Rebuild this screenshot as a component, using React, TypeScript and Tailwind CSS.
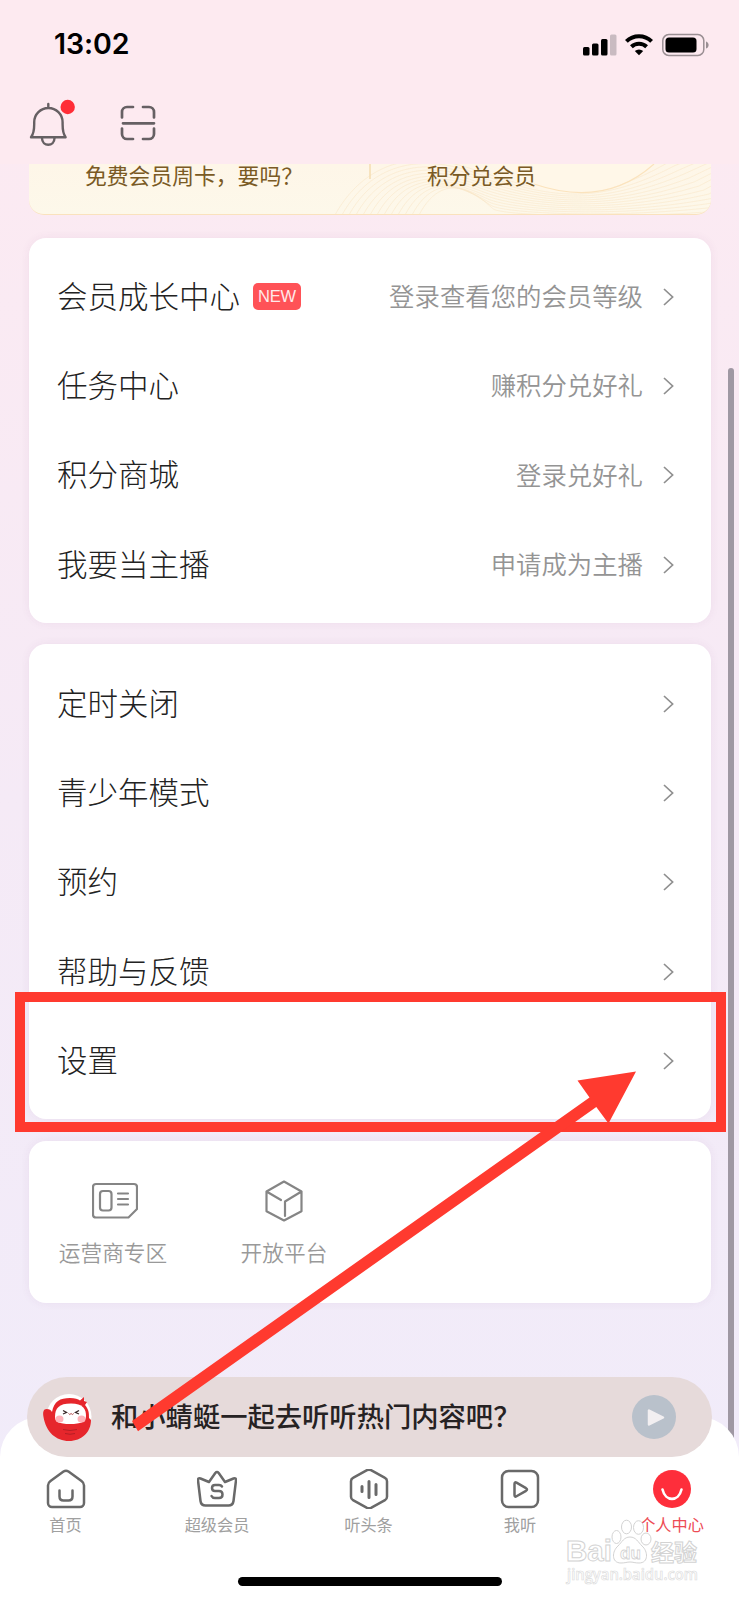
import React from 'react';

interface RowProps {
    label: string;
    hint?: string;
    badge?: string;
}

const memberRows: RowProps[] = [
    { label: '会员成长中心', hint: '登录查看您的会员等级', badge: 'NEW' },
    { label: '任务中心', hint: '赚积分兑好礼' },
    { label: '积分商城', hint: '登录兑好礼' },
    { label: '我要当主播', hint: '申请成为主播' },
];

const settingRows: RowProps[] = [
    { label: '定时关闭' },
    { label: '青少年模式' },
    { label: '预约' },
    { label: '帮助与反馈' },
    { label: '设置' },
];

function Row({ label, hint, badge }: RowProps) {
    return (
        <div className="flex h-[89.3px] items-center pl-[28px] pr-[37px]">
            <span className="pb-[3px] text-[30.5px] leading-none font-light text-[#222]">{label}</span>
            {badge && (
                <span className="ml-[13px] flex h-[27px] w-[48px] items-center justify-center rounded-[5px] bg-[#ff5257] font-['Liberation_Sans'] text-[16.5px] tracking-[-0.2px] text-[#ffe9e9]">
                    {badge}
                </span>
            )}
            <span className="ml-auto pb-[2px] text-[25.4px] leading-none font-[350] text-[#949494]">{hint}</span>
            <svg className="ml-[20px] h-[18px] w-[11px] shrink-0" viewBox="0 0 11 18" fill="none" stroke="#8f8f8f" strokeWidth="1.7">
                <path d="M1 1l8.6 8L1 17" />
            </svg>
        </div>
    );
}

function Card({ children, className }: { children: React.ReactNode; className: string }) {
    return (
        <section className={`ml-[29px] w-[682px] shrink-0 rounded-[17px] bg-white shadow-[0_0_10px_rgba(120,60,110,0.07)] ${className}`}>
            {children}
        </section>
    );
}

function StatusBar() {
    return (
        <div className="flex h-[88px] items-center pl-[54px] pr-[29px] pt-[1px]">
            <span className="font-['Inter'] text-[28.5px] leading-none font-semibold tracking-[-0.1px] text-black">13:02</span>
            <svg className="ml-auto h-[24px] w-[128px]" viewBox="0 0 128 24">
                <rect x="1" y="14" width="6.5" height="8.5" rx="1.5" />
                <rect x="10" y="10.5" width="6.5" height="12" rx="1.5" />
                <rect x="19" y="6" width="6.5" height="16.5" rx="1.5" />
                <rect x="28" y="1.5" width="6.5" height="21" rx="1.5" fill="#c9bbc1" />
                <g fill="none" stroke="#000" strokeWidth="4">
                    <path d="M44.4 8.4a18 18 0 0 1 25.2 0" />
                    <path d="M49.4 13.8a11 11 0 0 1 15.2 0" />
                </g>
                <path d="M57 22.3l-4.2-4.2a6.3 6.3 0 0 1 8.4 0z" />
                <rect x="80.8" y="1.6" width="41" height="20.8" rx="6" fill="none" stroke="#9a8f93" strokeWidth="1.5" />
                <rect x="83.5" y="4.5" width="31" height="15" rx="3.5" />
                <path d="M124 8.500c3.500 1 3.500 6 0 7z" fill="#9a8f93" />
            </svg>
        </div>
    );
}

function TopIcons() {
    return (
        <div className="flex h-[76px] items-start gap-[44px] pl-[28px] pt-[10px]">
            <svg className="h-[52px] w-[48px]" viewBox="28 98 48 52" fill="none" stroke="#666063" strokeWidth="2.4" strokeLinejoin="round" strokeLinecap="round">
                <path d="M48.300 104v4M31 137.200c2.400-3 3.200-7 3.200-13v-2a14.200 14.200 0 0 1 28.400 0v2c0 6 .8 10 3 13z" />
                <path d="M42 138c0 9 12.500 9 12.500 0" />
                <circle cx="67.700" cy="107" r="7.200" fill="#ff2d37" stroke="none" />
            </svg>
            <svg className="mt-[7px] h-[36px] w-[36px]" viewBox="0 0 36 36" fill="none" stroke="#666063" strokeWidth="2.7" strokeLinecap="round">
                <path d="M2 12.500V7a5 5 0 0 1 5-5h6M23 2h6a5 5 0 0 1 5 5v5.500M34 23.500V29a5 5 0 0 1-5 5h-6M13 34H7a5 5 0 0 1-5-5v-5.500M3 18.300h31" />
            </svg>
        </div>
    );
}

// hairlines behind the member banner
const waves = Array.from({ length: 13 }, (_, i) => i);

function MemberBanner() {
    return (
        <div className="relative ml-[29px] flex h-[51px] w-[682px] shrink-0 overflow-hidden rounded-b-[15px] border-b-[1.5px] border-[#fae2bd] bg-gradient-to-b from-[#fef6e8] to-[#fdf8ea] text-[21.8px] leading-[22px] text-[#7a5a24]">
            <svg className="absolute inset-0 h-[50px] w-[682px]" viewBox="0 0 682 50" fill="none">
                {waves.map((i) => (
                    <path
                        key={i}
                        d={`M${306 + i * 7} 51C${322 + i * 8} ${22 - i * 2} ${360 + i * 8} ${-22 + i * 5} ${440 + i * 2} ${4 + i * 3.4}S${560 + i * 3} ${44 + i} ${640 + i * 5} ${i * 4 - 2}L${690 + i * 3} ${-22 + i * 4}`}
                        stroke="#f8e3c1"
                        strokeWidth="0.8"
                        opacity="0.6"
                    />
                ))}
                <path d="M470 0c14 15 32 29 75 29 33 0 56-10 80-29z" fill="#fff7e8" />
                <path d="M505 20c35 12 80 16 120-20" stroke="#fbe3bd" strokeWidth="1.2" />
                <path d="M341 0v15" stroke="#f5ddb0" strokeWidth="1.5" />
            </svg>
            <span className="relative ml-[56px] w-[342px]">免费会员周卡，要吗？</span>
            <span className="relative">积分兑会员</span>
        </div>
    );
}

function Services() {
    return (
        <div className="flex h-[162px] pt-[38px] text-[21.7px] leading-none font-[350] text-[#999]">
            <div className="flex w-[168px] flex-col items-center">
                <svg className="ml-[3px] h-[44px] w-[46px]" viewBox="0 0 46 44" fill="none" stroke="#858585" strokeWidth="2.2">
                    <path d="M4 5h38a3 3 0 0 1 3 3v22l-8.500 8.500H4a3 3 0 0 1-3-3V8a3 3 0 0 1 3-3z" />
                    <rect x="8" y="12" width="11.5" height="19.500" rx="3" />
                    <path d="M26 14.500h10M26 20h10M26 25.500h10" strokeLinecap="round" />
                </svg>
                <span className="mt-[18px]">运营商专区</span>
            </div>
            <div className="flex w-[174px] flex-col items-center">
                <svg className="h-[44px] w-[38px]" viewBox="0 0 38 44" fill="none" stroke="#858585" strokeWidth="2.2" strokeLinejoin="round" strokeLinecap="round">
                    <path d="M19 2.500l17.500 10v19.800L19 41.500 1.500 32.300V12.500zM1.500 12.500L16 21M36.500 12.500L20 22.500V37" />
                </svg>
                <span className="mt-[18px]">开放平台</span>
            </div>
        </div>
    );
}

function Mascot() {
    return (
        <svg className="h-[48px] w-[52px]" viewBox="0 0 52 48">
            <circle cx="27" cy="23.500" r="22.500" fill="#fff" />
            <path d="M10 19C12 8 18 5 28 5c5 0 8 1 10 2.500l4-3.500 0 4 3 1-2 3c4 5 4 8 4 13l2 2c0 12-9 21-22 21C14 48 4 39 1.500 24c-1-5 0-8 3-8s4.500 1 5.500 3z" fill="#e6262c" />
            <path d="M13 24c0-9 4-13.500 16-13.500S44 16 44 23c0 6-5 8-16 8s-15-2-15-7z" fill="#fff" />
            <path d="M21 17.500l3.500 2-3.500 1.500M37 17.500l-3.500 2 3.500 1.500" fill="none" stroke="#3a2a2a" strokeWidth="1.300" />
            <path d="M26.500 20.500q1.300 2 2.600 0q1.300 2 2.600 0" fill="none" stroke="#b04a4a" strokeWidth="1" />
            <ellipse cx="17.500" cy="26" rx="4" ry="3.500" fill="#ffb2b9" />
            <ellipse cx="39.500" cy="26" rx="4" ry="3.500" fill="#ffb2b9" />
            <path d="M21 36.500q7 2 14 0M23 40.500q5 1.500 10 0" fill="none" stroke="#b51e25" strokeWidth="1" />
        </svg>
    );
}

function PlayerBar() {
    return (
        <div className="relative mx-auto flex h-[80px] w-[685px] items-center rounded-full bg-[#e6dada] pl-[15px] pr-[36px]">
            <Mascot />
            <span className="ml-[17px] pb-[3px] text-[27.3px] leading-none font-medium whitespace-nowrap text-[#262223]">和小蜻蜓一起去听听热门内容吧？</span>
            <svg className="absolute top-[18px] right-[36px] h-[44px] w-[44px]" viewBox="0 0 44 44">
                <circle cx="22" cy="22" r="22" fill="#b9c1cb" />
                <path d="M17 15.500v14l14-7z" fill="#f2eff1" stroke="#f2eff1" strokeWidth="2.500" strokeLinejoin="round" />
            </svg>
        </div>
    );
}

const tabs = [
    {
        name: '首页',
        icon: (
            <>
                <path d="M17.500 2.500q2.500-1.500 5 0l13 9.500q2.500 1.800 2.500 4.500V34a4 4 0 0 1-4 4H6a4 4 0 0 1-4-4V16.500q0-2.700 2.500-4.500z" />
                <path d="M13.500 21.500v6q0 4 4 4h5q4 0 4-4v-6" />
            </>
        ),
    },
    {
        name: '超级会员',
        icon: (
            <>
                <path d="M18.300 4q1.700-2 3.400 0l6.300 9 8.500-3.500q2.800-.8 2.500 2l-2.500 20.500q-.6 4.500-5 4.500h-23q-4.400 0-5-4.500L1 11.500q-.3-2.800 2.500-2L12 13z" />
                <path d="M25 17.500q-1-1.500-3-1.500h-4q-3 0-3 3t3 3h4q3.500 0 3.500 3.500T22 29h-4q-2.500 0-3.500-2" />
            </>
        ),
    },
    {
        name: '听头条',
        icon: (
            <>
                <path d="M18 1.200q2-1 4 0l14 7.600q2 1 2 3.400v15.600q0 2.400-2 3.400l-14 7.600q-2 1-4 0L4 31.200q-2-1-2-3.400V12.200q0-2.400 2-3.400z" />
                <path d="M13 17.500v5M20 12.500v16M27 15.500v10" strokeWidth="3" />
            </>
        ),
    },
    {
        name: '我听',
        icon: (
            <>
                <rect x="2" y="2" width="36" height="36" rx="6.5" />
                <path d="M14.500 15v11q0 2.500 2 1.300l9.500-5.500q2-1.300 0-2.600l-9.500-5.500q-2-1.200-2 1.300z" />
            </>
        ),
    },
    {
        name: '个人中心',
        icon: (
            <>
                <circle cx="20" cy="20" r="19" fill="#fe2e3b" stroke="none" />
                <path d="M10.500 20.500c3 12.500 16 12.500 19 0" stroke="#fff" strokeWidth="2.600" />
            </>
        ),
    },
];

function TabBar() {
    return (
        <nav className="-mt-[40px] h-[183px] rounded-t-[40px] bg-white pt-[52px]">
            <div className="flex justify-between pr-[2px]">
                {tabs.map((tab, i) => (
                    <div key={tab.name} className="flex w-[131px] flex-col items-center">
                        <svg className="h-[40px] w-[40px]" viewBox="0 0 40 40" fill="none" stroke="#696969" strokeWidth="2.500" strokeLinecap="round" strokeLinejoin="round">
                            {tab.icon}
                        </svg>
                        <span className={`mt-[7px] text-[16.2px] leading-none ${i === 4 ? 'text-[#ed4b55]' : 'text-[#a0a0a0]'}`}>{tab.name}</span>
                    </div>
                ))}
            </div>
            <div className="mx-auto mt-[45px] h-[9px] w-[264px] rounded-full bg-black" />
        </nav>
    );
}

function Watermark() {
    return (
        <svg className="absolute top-[1515px] left-[560px] z-20 h-[75px] w-[150px]" viewBox="560 1515 150 75" fill="#fff" stroke="#d3d3d3" strokeWidth="1">
            <text x="566" y="1561" fontFamily="Liberation Sans" fontWeight="700" fontSize="29.500">Bai</text>
            <path d="M630 1537c6 0 8 5 12 9 6 5 7 17-3 17-4 0-6-1-9-1s-5 1-9 1c-10 0-9-12-3-17 4-4 6-9 12-9z" />
            <ellipse cx="616.500" cy="1537" rx="4.500" ry="6.500" />
            <ellipse cx="626.500" cy="1527" rx="5" ry="6.800" />
            <ellipse cx="638.500" cy="1527.500" rx="5" ry="6.800" />
            <ellipse cx="646" cy="1539" rx="5" ry="6" />
            <text x="620" y="1559" fontFamily="Liberation Sans" fontWeight="700" fontSize="17" strokeWidth="0.800">du</text>
            <text x="651" y="1560.500" fontFamily="Noto Sans CJK SC" fontWeight="700" fontSize="23">经验</text>
            <text x="567" y="1580" fontFamily="Open Sans" fontWeight="600" fontSize="16" textLength="131" lengthAdjust="spacingAndGlyphs" strokeWidth="0.700" stroke="#dcdcdc">jingyan.baidu.com</text>
        </svg>
    );
}

function Highlight() {
    return (
        <>
            <div className="absolute top-[992px] left-[15px] z-20 h-[140px] w-[711px] border-[10.5px] border-[#ff3a2f]" />
            <svg className="absolute top-[1060px] left-[120px] z-20 h-[380px] w-[530px]" viewBox="120 1060 530 380" fill="#ff3a2f">
                <path d="M132 1421L589.500 1097.500 577.500 1080.500 636 1071.500 608.500 1123.500 596.300 1107 138 1431.300z" />
            </svg>
        </>
    );
}

export default function App() {
    return (
        <div className="relative flex h-[1600px] w-[739px] flex-col overflow-hidden bg-gradient-to-b from-[#fdeaf1] via-[#f5eaf6] to-[#f0ecfa] font-['Noto_Sans_CJK_SC',sans-serif]">
            <header className="h-[164px] shrink-0 bg-[#fdeaf0]">
                <StatusBar />
                <TopIcons />
            </header>
            <MemberBanner />
            <Card className="mt-[23px] h-[385px] pt-[14px]">
                {memberRows.map((row) => <Row key={row.label} {...row} />)}
            </Card>
            <Card className="mt-[21px] h-[475px] pt-[15px]">
                {settingRows.map((row) => <Row key={row.label} {...row} />)}
            </Card>
            <Card className="mt-[22px] h-[162px]">
                <Services />
            </Card>

            <div className="absolute top-[368px] left-[728px] h-[1080px] w-[6px] rounded-full bg-[#9f98a3]" />

            <div className="relative mt-[74px]">
                <div className="relative z-10"><PlayerBar /></div>
                <TabBar />
            </div>

            <Highlight />
            <Watermark />
        </div>
    );
}
